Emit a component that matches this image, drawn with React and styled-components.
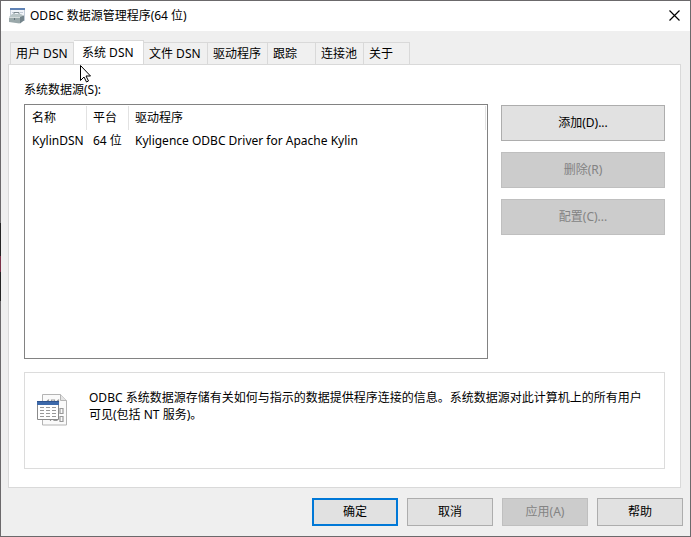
import React, { useState } from 'react';
import styled, { createGlobalStyle } from 'styled-components';

const GlobalStyle = createGlobalStyle`
  * {
    box-sizing: border-box;
  }

  body {
    margin: 0;
  }

  body, button {
    font-family: "Noto Sans", "Noto Sans CJK SC", sans-serif;
    font-size: 12px;
    color: #000;
  }
`;

const Desktop = styled.div`
  min-height: 100vh;
  display: flex;
  padding: 1px;
  background: linear-gradient(#6b696b 223px, #242424 223px, #242424 256px, #7a3048 256px, #7a3048 272px, #242424 272px, #242424 301px, #6b696b 301px) left / 1px 100% no-repeat, #6b696b;
`;

const Dialog = styled.div`
  position: relative;
  flex: 1;
  display: flex;
  flex-direction: column;
  background-color: #efefef;
`;

const TitleBar = styled.header`
  display: flex;
  align-items: center;
  height: 30px;
  padding-left: 8px;
  background-color: #fff;
`;

const Title = styled.h1`
  flex: 1;
  margin: 0 0 0 5px;
  font-size: 12px;
  font-weight: normal;
  line-height: 20px;
`;

const CloseButton = styled.button`
  display: flex;
  align-items: center;
  justify-content: center;
  width: 31px;
  height: 26px;
  margin-bottom: 2px;
  padding: 0;
  border: none;
  background: none;
`;

const Main = styled.main`
  flex: 1;
  display: flex;
  flex-direction: column;
  padding: 9px 9px 0 7px;
`;

const TabList = styled.div`
  display: flex;
  align-items: flex-end;
  height: 25px;
  margin-bottom: -1px;
  padding-left: 2px;
`;

const Tab = styled.button`
  flex: none;
  width: ${(props) => props.$width}px;
  height: ${(props) => (props.$active ? 25 : 23)}px;
  padding: 0 0 0 5px;
  border: 1px solid #d9d9d9;
  border-left-width: ${(props) => (props.$first ? 1 : 0)}px;
  border-bottom-color: ${(props) => (props.$active ? '#fff' : '#d9d9d9')};
  background-color: ${(props) => (props.$active ? '#fff' : '#f0f0f0')};
  line-height: 20px;
  text-align: left;
  text-indent: ${(props) => (props.$active ? 3 : 0)}px;
  white-space: nowrap;
`;

const Panel = styled.section`
  flex: 1;
  display: flex;
  flex-direction: column;
  padding: 15px 15px 18px;
  border: 1px solid #d9d9d9;
  background-color: #fff;
`;

const ListLabel = styled.div`
  height: 24px;
  line-height: 20px;
`;

const Sources = styled.div`
  flex: 1;
  display: flex;
  gap: 13px;
`;

const ListBox = styled.div`
  flex: 1;
  padding: 1px 1px 0 0;
  border: 1px solid #828282;
`;

const Table = styled.table`
  width: 100%;
  border-collapse: separate;
  border-spacing: 0;
  table-layout: fixed;
  line-height: 20px;
  text-align: left;
  white-space: nowrap;
`;

const HeaderCell = styled.th`
  width: ${(props) => props.$width};
  height: 24px;
  padding: 0 0 0 6px;
  border-right: 1px solid #e2e2e2;
  font-weight: normal;

  &:first-child {
    padding-left: 7px;
  }
`;

const Cell = styled.td`
  height: 22px;
  padding: 0 0 0 6px;

  &:first-child {
    padding-left: 7px;
  }
`;

const Actions = styled.div`
  display: flex;
  flex-direction: column;
  gap: 11px;
  width: 164px;
  padding-top: 1px;
`;

const Button = styled.button`
  height: ${(props) => (props.$tall ? 36 : 28)}px;
  padding: 0;
  border: 1px solid #adadad;
  background-color: #e1e1e1;
  line-height: 20px;

  &:disabled {
    border-color: #bfbfbf;
    background-color: #ccc;
    color: #838383;
  }
`;

const DefaultButton = styled(Button)`
  border: 2px solid #0078d7;
`;

const InfoBox = styled.div`
  display: flex;
  gap: 20px;
  min-height: 97px;
  margin-top: 13px;
  padding: 16px 15px 16px 12px;
  border: 1px solid #dcdcdc;
`;

const InfoText = styled.p`
  flex: 1;
  margin: 0;
  line-height: 17px;
`;

const InfoIcon = styled.svg`
  flex: none;
  margin-top: 5px;
`;

const Footer = styled.footer`
  display: grid;
  grid-template-columns: repeat(4, 86px);
  justify-content: end;
  gap: 9px;
  padding: 10px 7px;
`;

const Pointer = styled.svg`
  position: absolute;
  left: 77px;
  top: 62px;
`;

const tabs = [
  { name: '用户 DSN', width: 64 },
  { name: '系统 DSN', width: 70 },
  { name: '文件 DSN', width: 64 },
  { name: '驱动程序', width: 60 },
  { name: '跟踪', width: 48 },
  { name: '连接池', width: 48 },
  { name: '关于', width: 46 },
];

const sources = [
  { name: 'KylinDSN', platform: '64 位', driver: 'Kyligence ODBC Driver for Apache Kylin' },
];

function OdbcIcon() {
  return (
    <svg width="16" height="16" viewBox="0 0 16 16" aria-hidden="true">
      <path d="M1.500 .5h14v12h-14z" fill="#f1f4f9" stroke="#c3ccd8" />
      <path d="M1 0h15v2H1z" fill="#5f82b5" />
      <path d="M3 4.500h3M7 4.500h3M11 4.500h3" stroke="#c2cbd6" />
      <path d="M5 6V4.500h5V6" fill="none" stroke="#7d8a90" />
      <path d="M0 9l3-3h9l3 2-3 2z" fill="#b9c5c7" />
      <path d="M0 9h11l1 5-1.500 1.500L0 14z" fill="#9aa8aa" />
      <path d="M11 9l4-1.500v5l-4 3z" fill="#74848b" />
      <path d="M0 9.500h11" stroke="#d5dcdd" />
      <path d="M5 10h1v2H5z" fill="#64737b" />
    </svg>
  );
}

function SourceIcon() {
  return (
    <InfoIcon width="32" height="33" viewBox="0 0 32 33" aria-hidden="true">
      <path d="M5.500 .5h18l6 6v24.500h-24z" fill="#fafafa" stroke="#b4b4b4" />
      <path d="M23.500 .5v6h6" fill="#e5e5e5" stroke="#b4b4b4" />
      <g fill="none" stroke="#999" strokeWidth="1.200">
        <path d="M10 7l1.500-1v3M14.500 6h3v4h-3zM20 7l1.500-1v3" />
        <path d="M23 14.500h3v5h-3zM12 23l1.500-1v5M17 22.500h3v4h-3zM23 22.500h3v5h-3z" />
      </g>
      <path d="M.5 7.500h21v18H.5z" fill="#fff" stroke="#8a8a8a" />
      <path d="M0 7h22v4H0z" fill="#3d69aa" />
      <path d="M0 7.500h22" stroke="#2e5490" />
      <path
        d="M3 13.500h4M9 13.500h4M15 13.500h4M3 16.500h4M9 16.500h4M15 16.500h4M3 19.500h4M9 19.500h4M15 19.500h4M3 22.500h4M9 22.500h4M15 22.500h4"
        stroke="#999"
      />
    </InfoIcon>
  );
}

function App() {
  const [activeTab, setActiveTab] = useState(1);

  return (
    <Desktop>
      <GlobalStyle />
      <Dialog>
        <TitleBar>
          <OdbcIcon />
          <Title>ODBC 数据源管理程序(64 位)</Title>
          <CloseButton aria-label="关闭">
            <svg width="11" height="11" viewBox="0 0 11 11">
              <path d="M.5 .5l10 10M10.500 .5l-10 10" stroke="#000" strokeWidth="1.200" />
            </svg>
          </CloseButton>
        </TitleBar>

        <Main>
          <TabList role="tablist">
            {tabs.map((tab, index) => (
              <Tab
                key={tab.name}
                role="tab"
                aria-selected={index === activeTab}
                $active={index === activeTab}
                $first={index === 0}
                $width={tab.width}
                onClick={() => setActiveTab(index)}
              >
                {tab.name}
              </Tab>
            ))}
          </TabList>

          <Panel role="tabpanel">
            <ListLabel id="sources-label">系统数据源(S):</ListLabel>
            <Sources>
              <ListBox>
                <Table aria-labelledby="sources-label">
                  <thead>
                    <tr>
                      <HeaderCell $width="62px">名称</HeaderCell>
                      <HeaderCell $width="42px">平台</HeaderCell>
                      <HeaderCell $width="auto">驱动程序</HeaderCell>
                    </tr>
                  </thead>
                  <tbody>
                    {sources.map((source) => (
                      <tr key={source.name}>
                        <Cell>{source.name}</Cell>
                        <Cell>{source.platform}</Cell>
                        <Cell>{source.driver}</Cell>
                      </tr>
                    ))}
                  </tbody>
                </Table>
              </ListBox>
              <Actions>
                <Button $tall>添加(D)...</Button>
                <Button $tall disabled>删除(R)</Button>
                <Button $tall disabled>配置(C)...</Button>
              </Actions>
            </Sources>
            <InfoBox>
              <SourceIcon />
              <InfoText>
                ODBC 系统数据源存储有关如何与指示的数据提供程序连接的信息。系统数据源对此计算机上的所有用户可见(包括 NT 服务)。
              </InfoText>
            </InfoBox>
          </Panel>
        </Main>

        <Footer>
          <DefaultButton>确定</DefaultButton>
          <Button>取消</Button>
          <Button disabled>应用(A)</Button>
          <Button>帮助</Button>
        </Footer>

        <Pointer width="14" height="20" viewBox="0 0 14 20" aria-hidden="true">
          <path
            d="M2.500 2.500v15l3.500-3.500 2.500 5 2-1-2.500-5h4.500z"
            fill="#fff"
            stroke="#000"
          />
        </Pointer>
      </Dialog>
    </Desktop>
  );
}

export default App;
